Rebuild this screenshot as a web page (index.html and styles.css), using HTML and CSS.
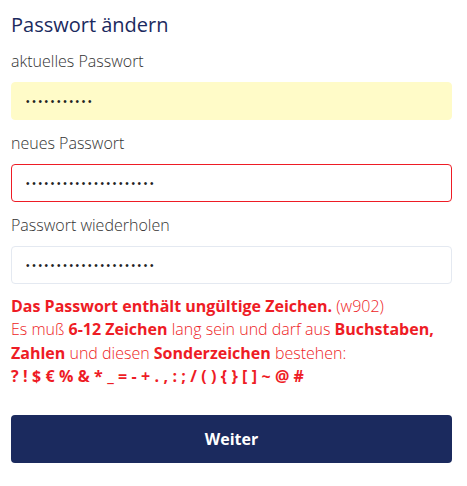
FILE: index.html
```html
<!DOCTYPE html>
<html lang="de">
<head>
<meta charset="utf-8">
<title>Passwort ändern</title>
<link rel="stylesheet" href="styles.css">
</head>
<body>
<form class="form">
  <h1 class="title">Passwort ändern</h1>
  <div class="group">
    <label class="label" for="pw-old">aktuelles Passwort</label>
    <input class="input input-filled" id="pw-old" type="password" value="12345678901">
  </div>
  <div class="group">
    <label class="label" for="pw-new">neues Passwort</label>
    <input class="input input-error" id="pw-new" type="password" value="123456789012345678901">
  </div>
  <div class="group">
    <label class="label" for="pw-rep">Passwort wiederholen</label>
    <input class="input" id="pw-rep" type="password" value="123456789012345678901">
  </div>
  <div class="error">
    <p class="error-line"><strong>Das Passwort enthält ungültige Zeichen.</strong> (w902)</p>
    <p class="error-line">Es muß <strong>6-12 Zeichen</strong> lang sein und darf aus <strong>Buchstaben, Zahlen</strong> und diesen <strong>Sonderzeichen</strong> bestehen:</p>
    <p class="error-line chars"><strong>? ! $ € % &amp; * _ = - + . , : ; / ( ) { } [ ] ~ @ #</strong></p>
  </div>
  <button class="button" type="button">Weiter</button>
</form>
</body>
</html>
```
FILE: styles.css
```css
html, body {
  margin: 0;
  padding: 0;
  background: #ffffff;
}
body {
  font-family: "Open Sans", "Noto Sans", sans-serif;
  color: #333333;
}
.form {
  width: 441px;
  padding: 11px 15px 0 11px;
  display: flex;
  flex-direction: column;
}
.title {
  margin: 0 0 10px 0;
  font-size: 20px;
  line-height: 28px;
  font-weight: 400;
  color: #1b2a5e;
}
.group {
  display: flex;
  flex-direction: column;
  margin-bottom: 11px;
}
.label {
  font-size: 16px;
  line-height: 24px;
  font-weight: 300;
  margin-bottom: 9px;
  color: #333333;
}
.input {
  box-sizing: border-box;
  height: 38px;
  width: 100%;
  margin: 0;
  padding: 0 14px;
  border: 1px solid #e4e9f1;
  border-radius: 4px;
  background: #ffffff;
  font-family: "Liberation Sans", sans-serif;
  font-size: 10px;
  letter-spacing: 2.7px;
  color: #222222;
  outline: none;
}
.input-filled {
  background: #fffbc8;
  border-color: #fffbc8;
}
.input-error {
  border-color: #ee1c25;
}
.error {
  color: #ee1c25;
  font-size: 16px;
  line-height: 23.3px;
  font-weight: 300;
  margin: 0 0 27px 0;
}
.error-line {
  margin: 0;
}
.error strong {
  font-weight: 700;
}
.chars {
  word-spacing: 0.2px;
}
.button {
  height: 48px;
  width: 100%;
  border: none;
  border-radius: 4px;
  background: #1b2a5e;
  color: #ffffff;
  font-family: "Open Sans", "Noto Sans", sans-serif;
  font-size: 16px;
  font-weight: 700;
  cursor: pointer;
}
```
